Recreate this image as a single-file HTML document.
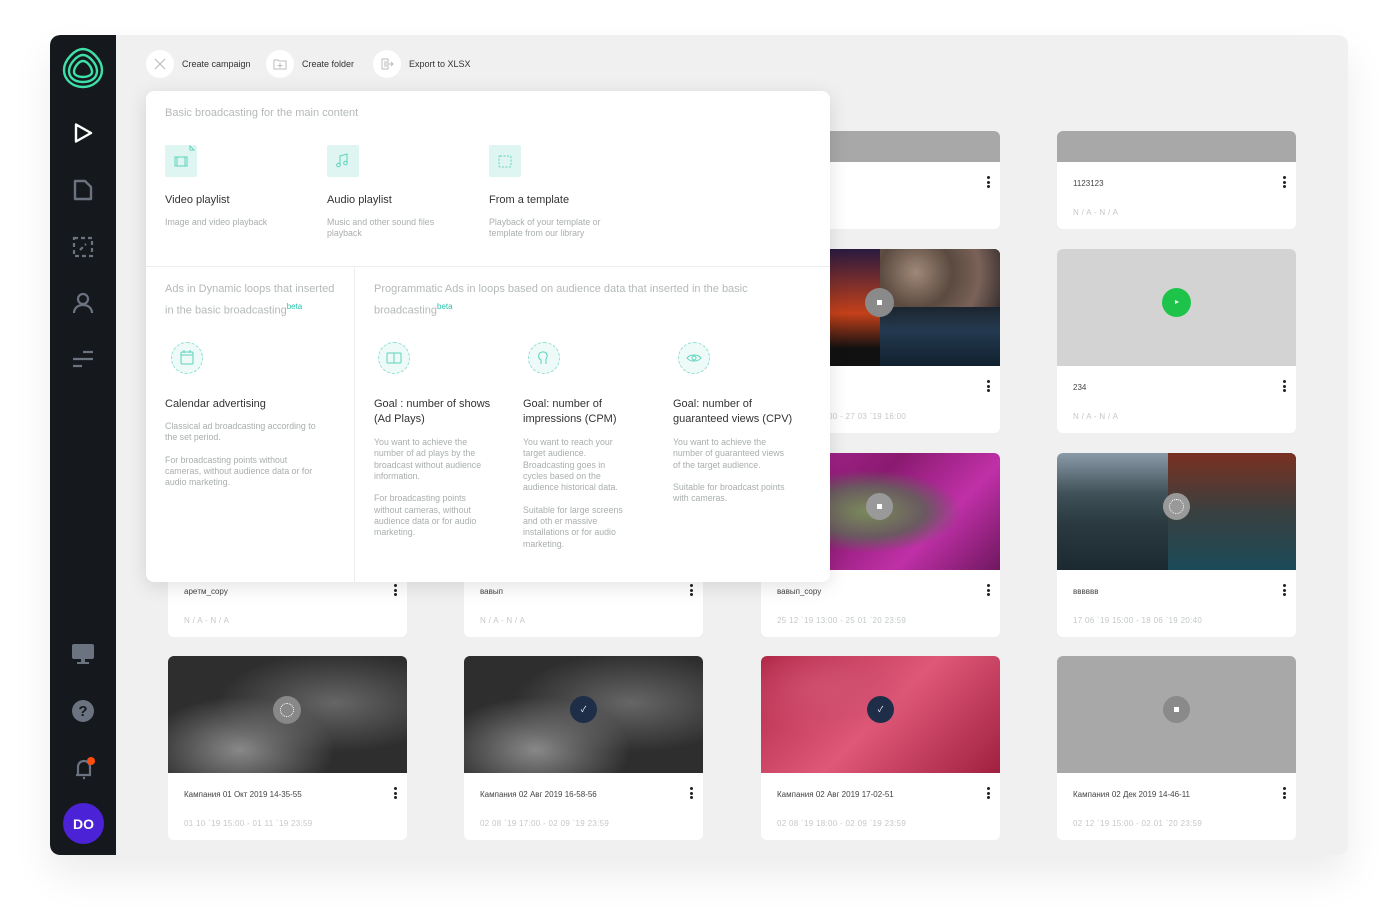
<!DOCTYPE html>
<html><head><meta charset="utf-8"><style>
*{box-sizing:border-box;margin:0;padding:0}
body{width:1399px;height:921px;background:#fff;font-family:"Liberation Sans","Noto Sans CJK SC",sans-serif;position:relative;overflow:hidden}
.app{position:absolute;left:50px;top:35px;width:1298px;height:820px;background:#f0f0f0;border-radius:10px;box-shadow:0 20px 40px rgba(0,0,0,.08);overflow:hidden}
.side{position:absolute;left:0;top:0;width:66px;height:820px;background:#15181c;border-radius:10px 0 0 10px}
.ic{position:absolute;left:21px}
.card{position:absolute;width:239px;height:184px;background:#fff;border-radius:6px;overflow:hidden}
.img{position:absolute;left:0;top:0;width:239px;height:117px}
.t{position:absolute;left:16px;top:134px;font-size:8px;color:#444}
.d{position:absolute;left:16px;top:163px;font-size:8px;color:#c4c8c8;letter-spacing:.3px;white-space:nowrap}
.dots{position:absolute;right:10px;top:131px;width:3px}
.dots i{display:block;width:3px;height:3px;background:#222;border-radius:50%;margin-bottom:1.5px}
.tb{position:absolute;top:15px;display:flex;align-items:center;font-size:9px;color:#333}
.tb span.c{width:28px;height:28px;border-radius:50%;background:#fff;margin-right:8px;display:flex;align-items:center;justify-content:center}
.panel{position:absolute;left:96px;top:56px;width:684px;height:491px;background:#fff;border-radius:8px;box-shadow:0 4px 20px rgba(0,0,0,.12)}
.gh{color:#b4b9b9;font-size:11px;line-height:17px;position:absolute}
.gh sup{color:#2cc4a8;font-size:8px}
.ti{position:absolute;font-size:11px;color:#333;line-height:15px}
.ds{position:absolute;font-size:8.8px;color:#a9aeae;line-height:11.3px}
.fi{position:absolute;width:32px;height:32px;background:#dff5f1;border-radius:2px}
.ci{position:absolute;width:32px;height:32px;border-radius:50%;border:1px dashed #8fe0d2;background:#eefaf8}
</style></head><body>
<div class="app">
<div class="side">
<svg class="ic" style="left:11px;top:11px" width="44" height="44" viewBox="0 0 44 44" fill="none" stroke="#3ee0a8" stroke-width="2.4"><path d="M22 3C30 3 41 14 41 24c0 10-9 17-19 17S3 34 3 24C3 14 14 3 22 3z"/><path d="M22 9c6 0 14 9 14 16 0 7-6 11-14 11S8 32 8 25C8 18 16 9 22 9z"/><path d="M22 15c4 0 9 6 9 11 0 3-4 5-9 5s-9-2-9-5c0-5 5-11 9-11z"/></svg>
<svg class="ic" style="top:86px" width="24" height="24" viewBox="0 0 24 24" fill="none" stroke="#fff" stroke-width="2.4" stroke-linejoin="round"><path d="M5 3.5L20 12 5 20.5z"/></svg>
<svg class="ic" style="top:143px" width="24" height="24" viewBox="0 0 24 24" fill="none" stroke="#6b7280" stroke-width="2.4" stroke-linejoin="round"><path d="M4 3h10l6 6v12H4z"/></svg>
<svg class="ic" style="top:200px" width="24" height="24" viewBox="0 0 24 24" fill="none" stroke="#6b7280" stroke-width="2.2" stroke-dasharray="4 3"><rect x="3" y="3" width="18" height="18"/><path d="M9 15l6-6"/></svg>
<svg class="ic" style="top:256px" width="24" height="24" viewBox="0 0 24 24" fill="none" stroke="#6b7280" stroke-width="2.2"><circle cx="12" cy="8" r="5"/><path d="M3 22c0-5 4-8 9-8s9 3 9 8"/></svg>
<svg class="ic" style="top:312px" width="24" height="24" viewBox="0 0 24 24" fill="none" stroke="#6b7280" stroke-width="2.2"><path d="M12 5h10M2 12h20M2 19h9"/></svg>
<svg class="ic" style="top:607px" width="24" height="24" viewBox="0 0 24 24" fill="#6b7280"><rect x="1" y="2" width="22" height="15" rx="2"/><rect x="10" y="17" width="4" height="3"/><rect x="6" y="20" width="12" height="2"/></svg>
<svg class="ic" style="top:664px" width="24" height="24" viewBox="0 0 24 24"><circle cx="12" cy="12" r="11" fill="#6b7280"/><text x="12" y="17" text-anchor="middle" font-size="15" font-weight="bold" fill="#15181c" font-family="Liberation Sans">?</text></svg>
<svg class="ic" style="top:720px" width="26" height="26" viewBox="0 0 26 26" fill="none" stroke="#6b7280" stroke-width="2.2"><path d="M5 20h15M7 20v-8c0-4 3-6 6-6s6 2 6 6v8M12 23h2"/><circle cx="20" cy="6" r="4" fill="#ff4d0d" stroke="none"/></svg>
<div style="position:absolute;left:13px;top:768px;width:41px;height:41px;border-radius:50%;background:#4b22d6;color:#fff;font-weight:bold;font-size:14px;display:flex;align-items:center;justify-content:center">DO</div>
</div>

<div class="tb" style="left:96px"><span class="c"><svg width="14" height="14" viewBox="0 0 14 14" stroke="#bbb" stroke-width="1.2"><path d="M2 2l10 10M12 2L2 12"/></svg></span>Create campaign</div>
<div class="tb" style="left:216px"><span class="c"><svg width="14" height="12" viewBox="0 0 14 12" fill="none" stroke="#bbb"><path d="M1 2h4l1 1h7v8H1z M7 5v5M4.5 7.5h5"/></svg></span>Create folder</div>
<div class="tb" style="left:323px"><span class="c"><svg width="14" height="12" viewBox="0 0 14 12" fill="none" stroke="#bbb"><path d="M2 1h6v10H2z M4 4h3M4 6h3M4 8h3M9 6h4M11 4l2 2-2 2"/></svg></span>Export to XLSX</div>

<div class="card" style="left:1007px;top:96px;height:98px"><div class="img" style="height:31px;background:#a8a8a8"></div><div class="t" style="top:48px">1123123</div><div class="d" style="top:77px">N / A - N / A</div><div class="dots" style="top:45px"><i></i><i></i><i></i></div></div>
<div class="card" style="left:711px;top:96px;height:98px"><div class="img" style="height:31px;background:#a8a8a8"></div><div class="t" style="top:48px">test_test_test</div><div class="dots" style="top:45px"><i></i><i></i><i></i></div></div>

<div class="card" style="left:711px;top:214px"><div class="img" style="background:linear-gradient(90deg,transparent 119px,#000 119px),linear-gradient(180deg,#2a1a40,#c4401a 55%,#111 85%)"></div><div style="position:absolute;left:119px;top:0;width:120px;height:58px;background:radial-gradient(circle at 30% 40%,#a08878,#5a4a40 40%,#7a6258 70%,#3a3030)"></div><div style="position:absolute;left:119px;top:58px;width:120px;height:59px;background:linear-gradient(180deg,#1c2530,#243a50 40%,#10202e)"></div><div style="position:absolute;left:104px;top:39px;background:#8a8a8a;width:29px;height:29px;border-radius:50%"></div><div style="position:absolute;left:116px;top:51px;width:5px;height:5px;background:#fff"></div><div class="d" style="top:163px">27 03 `19 10:00 - 27 03 `19 16:00</div><div class="dots"><i></i><i></i><i></i></div></div>
<div class="card" style="left:1007px;top:214px"><div class="img" style="background:#d3d3d3"></div><div style="position:absolute;left:105px;top:39px;width:29px;height:29px;border-radius:50%;background:#1ec44a"></div><div style="position:absolute;left:118px;top:51px;border-left:4px solid #fff;border-top:2.5px solid transparent;border-bottom:2.5px solid transparent"></div><div class="t">234</div><div class="d">N / A - N / A</div><div class="dots"><i></i><i></i><i></i></div></div>

<div class="card" style="left:118px;top:418px"><div class="img" style="background:#666"></div><div class="t">apeтм_copy</div><div class="d">N / A - N / A</div><div class="dots"><i></i><i></i><i></i></div></div>
<div class="card" style="left:414px;top:418px"><div class="img" style="background:#777"></div><div class="t">вавып</div><div class="d">N / A - N / A</div><div class="dots"><i></i><i></i><i></i></div></div>
<div class="card" style="left:711px;top:418px"><div class="img" style="background:radial-gradient(ellipse at 45% 50%,#7a8a5a,#6a5a60 30%,transparent 50%),linear-gradient(135deg,#b0289a,#8a1a70 40%,#c030a8 70%,#701860)"></div><div style="position:absolute;left:105px;top:40px;width:27px;height:27px;border-radius:50%;background:#999"></div><div style="position:absolute;left:116px;top:51px;width:5px;height:5px;background:#fff"></div><div class="t">вавып_copy</div><div class="d">25 12 `19 13:00 - 25 01 `20 23:59</div><div class="dots"><i></i><i></i><i></i></div></div>
<div class="card" style="left:1007px;top:418px"><div class="img" style="background:linear-gradient(90deg,transparent 111px,#1a4a58 111px),linear-gradient(180deg,#8a9aa8,#405058 35%,#2a3a40 60%,#1a2a30)"></div><div style="position:absolute;left:111px;top:0;width:128px;height:117px;background:linear-gradient(180deg,#7a3020,#3a4040 50%,#1a4a58)"></div><div style="position:absolute;left:106px;top:40px;width:27px;height:27px;border-radius:50%;background:#999"></div><div style="position:absolute;left:112px;top:46px;width:15px;height:15px;border-radius:50%;border:1.5px dotted #fff"></div><div class="t">вввввв</div><div class="d">17 06 `19 15:00 - 18 06 `19 20:40</div><div class="dots"><i></i><i></i><i></i></div></div>

<div class="card" style="left:118px;top:621px"><div class="img" style="background:radial-gradient(ellipse at 30% 80%,#888,transparent 40%),radial-gradient(ellipse at 70% 40%,#666,transparent 50%),#2e2e2e"></div><div style="position:absolute;left:105px;top:40px;width:28px;height:28px;border-radius:50%;background:#888"></div><div style="position:absolute;left:112px;top:47px;width:14px;height:14px;border-radius:50%;border:1.5px dotted #fff"></div><div class="t">Кампания 01 Окт 2019 14-35-55</div><div class="d">01 10 `19 15:00 - 01 11 `19 23:59</div><div class="dots"><i></i><i></i><i></i></div></div>
<div class="card" style="left:414px;top:621px"><div class="img" style="background:radial-gradient(ellipse at 30% 80%,#888,transparent 40%),radial-gradient(ellipse at 70% 40%,#666,transparent 50%),#2e2e2e"></div><div style="position:absolute;left:106px;top:40px;width:27px;height:27px;border-radius:50%;background:#1e2e48;color:#fff;font-size:8px;text-align:center;line-height:27px">✓</div><div class="t">Кампания 02 Авг 2019 16-58-56</div><div class="d">02 08 `19 17:00 - 02 09 `19 23:59</div><div class="dots"><i></i><i></i><i></i></div></div>
<div class="card" style="left:711px;top:621px"><div class="img" style="background:radial-gradient(ellipse at 30% 30%,#d05070,transparent 40%),linear-gradient(135deg,#b02848,#e05878 50%,#a02040)"></div><div style="position:absolute;left:106px;top:40px;width:27px;height:27px;border-radius:50%;background:#1e2e48;color:#fff;font-size:8px;text-align:center;line-height:27px">✓</div><div class="t">Кампания 02 Авг 2019 17-02-51</div><div class="d">02 08 `19 18:00 - 02 09 `19 23:59</div><div class="dots"><i></i><i></i><i></i></div></div>
<div class="card" style="left:1007px;top:621px"><div class="img" style="background:#a8a8a8"></div><div style="position:absolute;left:106px;top:40px;width:27px;height:27px;border-radius:50%;background:#8a8a8a"></div><div style="position:absolute;left:117px;top:51px;width:5px;height:5px;background:#fff"></div><div class="t">Кампания 02 Дек 2019 14-46-11</div><div class="d">02 12 `19 15:00 - 02 01 `20 23:59</div><div class="dots"><i></i><i></i><i></i></div></div>

<div class="panel">
<div class="gh" style="left:19px;top:14px">Basic broadcasting for the main content</div>
<div class="fi" style="left:19px;top:54px"><svg width="32" height="32" viewBox="0 0 32 32" fill="none" stroke="#5dd3bd"><rect x="10" y="12" width="12" height="9"/><path d="M12 12v9M20 12v9"/><path d="M25 1l4 4h-4z" fill="#fff"/></svg></div>
<div class="fi" style="left:181px;top:54px"><svg width="32" height="32" viewBox="0 0 32 32" fill="none" stroke="#5dd3bd"><path d="M13 20V11l7-2v9"/><circle cx="11.5" cy="20" r="1.8"/><circle cx="18.5" cy="18" r="1.8"/></svg></div>
<div class="fi" style="left:343px;top:54px"><svg width="32" height="32" viewBox="0 0 32 32" fill="none" stroke="#5dd3bd" stroke-dasharray="2 1.5"><rect x="10" y="11" width="12" height="11" rx="1"/></svg></div>
<div class="ti" style="left:19px;top:102px">Video playlist</div>
<div class="ti" style="left:181px;top:102px">Audio playlist</div>
<div class="ti" style="left:343px;top:102px">From a template</div>
<div class="ds" style="left:19px;top:126px">Image and video playback</div>
<div class="ds" style="left:181px;top:126px">Music and other sound files<br>playback</div>
<div class="ds" style="left:343px;top:126px">Playback of your template or<br>template from our library</div>
<div style="position:absolute;left:0;top:175px;width:684px;height:1px;background:#eee"></div>
<div style="position:absolute;left:208px;top:175px;width:1px;height:316px;background:#eee"></div>
<div class="gh" style="left:19px;top:190px">Ads in Dynamic loops that inserted<br>in the basic broadcasting<sup>beta</sup></div>
<div class="gh" style="left:228px;top:190px">Programmatic Ads in loops based on audience data that inserted in the basic<br>broadcasting<sup>beta</sup></div>
<div class="ci" style="left:25px;top:251px"><svg width="30" height="30" viewBox="0 0 30 30" fill="none" stroke="#5dd3bd"><rect x="9" y="9" width="12" height="12" rx="1"/><path d="M9 12h12M12 7v3M18 7v3"/></svg></div>
<div class="ci" style="left:232px;top:251px"><svg width="30" height="30" viewBox="0 0 30 30" fill="none" stroke="#5dd3bd"><rect x="8" y="10" width="14" height="10" rx="1"/><path d="M15 10v10"/></svg></div>
<div class="ci" style="left:382px;top:251px"><svg width="30" height="30" viewBox="0 0 30 30" fill="none" stroke="#5dd3bd"><path d="M12 21v-4c-2-1-3-3-2-6 1-2 5-3 7-1 2 2 1 5 0 6v5"/></svg></div>
<div class="ci" style="left:532px;top:251px"><svg width="30" height="30" viewBox="0 0 30 30" fill="none" stroke="#5dd3bd"><path d="M8 15c3-4 11-4 14 0-3 4-11 4-14 0z"/><circle cx="15" cy="15" r="2"/></svg></div>
<div class="ti" style="left:19px;top:306px">Calendar advertising</div>
<div class="ti" style="left:228px;top:306px">Goal : number of shows<br>(Ad Plays)</div>
<div class="ti" style="left:377px;top:306px">Goal: number of<br>impressions (CPM)</div>
<div class="ti" style="left:527px;top:306px">Goal: number of<br>guaranteed views (CPV)</div>
<div class="ds" style="left:19px;top:330px">Classical ad broadcasting according to<br>the set period.<br><br style="line-height:10px">For broadcasting points without<br>cameras, without audience data or for<br>audio marketing.</div>
<div class="ds" style="left:228px;top:346px">You want to achieve the<br>number of ad plays by the<br>broadcast without audience<br>information.<br><br style="line-height:10px">For broadcasting points<br>without cameras, without<br>audience data or for audio<br>marketing.</div>
<div class="ds" style="left:377px;top:346px">You want to reach your<br>target audience.<br>Broadcasting goes in<br>cycles based on the<br>audience historical data.<br><br style="line-height:10px">Suitable for large screens<br>and oth er massive<br>installations or for audio<br>marketing.</div>
<div class="ds" style="left:527px;top:346px">You want to achieve the<br>number of guaranteed views<br>of the target audience.<br><br style="line-height:10px">Suitable for broadcast points<br>with cameras.</div>
</div>
</div>
</body></html>
